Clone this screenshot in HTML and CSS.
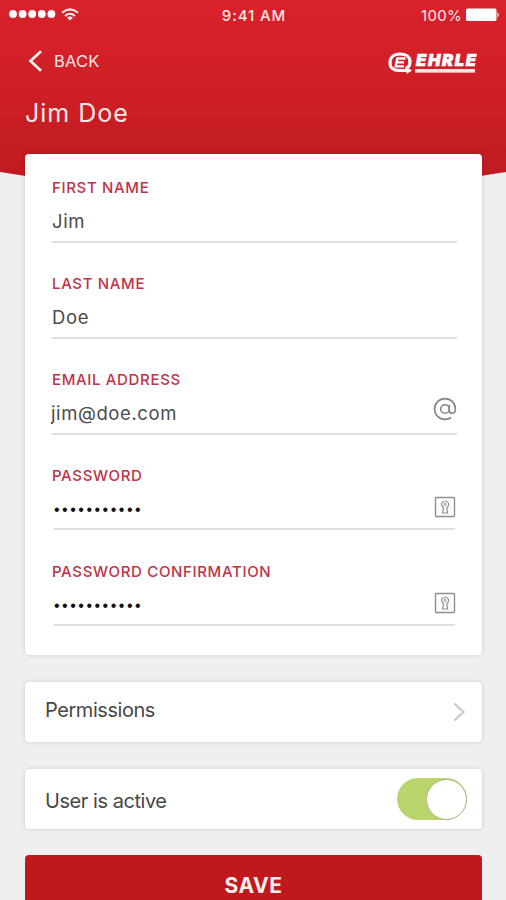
FILE: index.html
```html
<!DOCTYPE html>
<html lang="en">
<head>
<meta charset="utf-8">
<title>Jim Doe</title>
<link rel="stylesheet" href="styles.css">
</head>
<body>
<div class="screen">
  <svg class="backdrop" viewBox="0 0 506 200" aria-hidden="true">
    <defs><linearGradient id="red" x1="0" y1="0" x2="0" y2="1"><stop offset="0" stop-color="#d9212a"/><stop offset=".35" stop-color="#d22028"/><stop offset="1" stop-color="#bd191f"/></linearGradient></defs>
    <path d="M0 0H506V172Q253 214 0 172Z" fill="url(#red)"/>
  </svg>
  <header class="header">
    <div class="status">
      <div class="signal">
        <svg width="47" height="10" viewBox="0 0 47 10" fill="#fff"><circle cx="4" cy="5" r="3.9"/><circle cx="13.6" cy="5" r="3.9"/><circle cx="23.2" cy="5" r="3.9"/><circle cx="32.8" cy="5" r="3.9"/><circle cx="42.4" cy="5" r="3.9"/></svg>
        <svg width="18" height="13" viewBox="0 0 18 13" fill="none" stroke="#ffe9e6" stroke-width="2"><path d="M1 4.8Q9-2 17 4.8M4 8Q9 3.6 14 8"/><path d="M9 12.5L6 9.6Q9 7.4 12 9.6Z" fill="#fff" stroke="none"/></svg>
      </div>
      <span class="time">9:41 AM</span>
      <div class="battery">
        <span class="percent">100%</span>
        <svg width="34" height="14" viewBox="0 0 34 14" fill="#fff"><rect x="0" y="0.5" width="30.5" height="12.5" rx="1.5"/><path d="M31.5 4Q34 6.8 31.5 9.6Z"/></svg>
      </div>
    </div>
    <div class="nav">
      <div class="back">
        <svg width="15" height="22" viewBox="0 0 15 22" fill="none" stroke="#fff3f0" stroke-width="2.7"><path d="M13 1.2L2.5 11L13 20.8"/></svg>
        <span>BACK</span>
      </div>
      <div class="brand">
        <svg width="25" height="23" viewBox="0 0 25 23" fill="none" stroke="#fff"><path d="M19 18.5H11C5.5 18.5 2 15.5 2 11C2 5.5 6 2 12 2C18 2 22 5 22 10C22 13 20.5 15.5 17.5 16.5" stroke-width="3.2"/><path d="M18.5 15L24 18.5L18.5 22Z" fill="#fff" stroke="none"/><path d="M17.5 6.5H9.3L7.7 14.3H16M8.5 10.4H16" stroke-width="2.3"/></svg>
        <div class="wordmark"><span class="brand-name">EHRLE</span><span class="brand-bar"></span></div>
      </div>
    </div>
    <h1 class="title">Jim Doe</h1>
  </header>
  <main class="content">
    <section class="card form">
      <div class="field"><label class="label">FIRST NAME</label><div class="value"><span>Jim</span></div></div>
      <div class="field"><label class="label">LAST NAME</label><div class="value"><span>Doe</span></div></div>
      <div class="field"><label class="label">EMAIL ADDRESS</label><div class="value"><span class="email">jim@doe.com</span>
        <svg class="at" width="24" height="24" viewBox="0 0 24 24" fill="none" stroke="#858585" stroke-width="1.6"><circle cx="12" cy="12" r="4.3"/><path d="M16.3 7.7V13.4Q16.3 16.2 19 16.2Q22.4 16.2 22.4 12A10.4 10.4 0 1 0 12 22.4Q15.5 22.4 18.2 20.5"/></svg></div></div>
      <div class="field secret"><label class="label">PASSWORD</label><div class="value"><span class="dots">•••••••••••</span>
        <svg class="lock" width="22" height="22" viewBox="0 0 22 22" fill="none" stroke="#8f8f8f" stroke-width="1.4"><rect x="1.5" y="1.5" width="19" height="19" rx="1"/><path d="M9.5 11.6A3.5 3.5 0 1 1 12.7 11.6L13.6 17H8.6Z" stroke-width="1.2"/><circle cx="11" cy="8.5" r="1.1" stroke-width="1"/></svg></div></div>
      <div class="field secret"><label class="label">PASSWORD CONFIRMATION</label><div class="value"><span class="dots">•••••••••••</span>
        <svg class="lock" width="22" height="22" viewBox="0 0 22 22" fill="none" stroke="#8f8f8f" stroke-width="1.4"><rect x="1.5" y="1.5" width="19" height="19" rx="1"/><path d="M9.5 11.6A3.5 3.5 0 1 1 12.7 11.6L13.6 17H8.6Z" stroke-width="1.2"/><circle cx="11" cy="8.5" r="1.1" stroke-width="1"/></svg></div></div>
    </section>
    <section class="card row permissions">
      <span>Permissions</span>
      <svg width="13" height="20" viewBox="0 0 13 20" fill="none" stroke="#c9c9c9" stroke-width="2.3"><path d="M1.5 1.5L10.5 10L1.5 18.5"/></svg>
    </section>
    <section class="card row active">
      <span>User is active</span>
      <div class="toggle"><div class="knob"></div></div>
    </section>
    <button class="save">SAVE</button>
  </main>
</div>
</body>
</html>
```
FILE: styles.css
```css
* { box-sizing: border-box; }
body { margin: 0; background: #efefef; font-family: Inter, "Liberation Sans", sans-serif; }
svg { display: block; flex: none; }
.screen { position: relative; width: 506px; height: 900px; overflow: hidden; }
.backdrop { position: absolute; top: 0; left: 0; width: 506px; height: 200px; }
.header { position: relative; height: 154px; color: #ffe9e6; }
.status { display: grid; grid-template-columns: 1fr auto 1fr; align-items: center; height: 30px; padding: 0 6px 0 9px; }
.signal { display: flex; align-items: center; gap: 5px; padding-bottom: 2px; }
.time { font-size: 15px; font-weight: 500; letter-spacing: .9px; padding-top: 1px; margin-left: -1px; }
.battery { display: flex; justify-content: flex-end; align-items: center; gap: 4px; }
.percent { font-size: 15px; letter-spacing: .3px; }
.nav { display: flex; align-items: center; justify-content: space-between; height: 62px; padding: 0 25px 0 28px; }
.back { display: flex; align-items: center; gap: 11px; font-size: 16.5px; letter-spacing: .2px; }
.brand { display: flex; align-items: center; gap: 3px; padding-top: 4px; }
.wordmark { display: flex; flex-direction: column; gap: 2px; width: 65px; }
.brand-name { font: italic 900 16.5px/13px Inter, sans-serif; color: #fff; letter-spacing: 1.7px; -webkit-text-stroke: .7px #fff; }
.brand-bar { height: 4px; width: 60px; margin-left: -1px; background: #ffe3e1; border-bottom: 1px solid #ef9d9e; }
.title { margin: 5px 0 0 25px; font-size: 25px; line-height: 32px; font-weight: 400; letter-spacing: 1px; }
.content { position: relative; display: flex; flex-direction: column; gap: 27px; padding: 0 24px 0 25px; }
.card { background: #fff; border-radius: 4px; box-shadow: 0 0 4px rgba(0, 0, 0, .16); }
.form { height: 501px; padding: 24px 25px 0 27px; display: flex; flex-direction: column; gap: 31px; }
.field { height: 65px; }
.label { display: block; height: 20px; font-size: 15px; line-height: 20px; font-weight: 500; letter-spacing: .65px; color: #bf3347; }
.value { display: flex; justify-content: space-between; align-items: center; height: 45px; padding-top: 3px; border-bottom: 2px solid #dedede; font-size: 18.5px; letter-spacing: .6px; color: #4b4b4b; }
.email { margin-left: -1px; }
.at { margin-bottom: 8px; }
.secret .value { height: 44px; margin: 0 0 0 2px; padding: 0; border: 0; background: linear-gradient(#dedede, #dedede) left bottom / calc(100% - 2px) 2px no-repeat; }
.lock { margin: 0 1px 3px 0; }
.dots { font: 16px/20px "Liberation Sans", sans-serif; letter-spacing: 2.5px; color: #111; padding-top: 3px; }
.row { display: flex; align-items: center; justify-content: space-between; font-size: 20px; letter-spacing: -.45px; color: #474747; }
.permissions { height: 60px; padding: 0 16px 0 20px; }
.permissions span { padding-bottom: 5px; }
.active { height: 60px; padding: 0 15px 0 20px; }
.active span { padding-top: 4px; }
.toggle { width: 70px; height: 42px; border-radius: 21px; background: #bad46c; display: flex; justify-content: flex-end; align-items: center; }
.knob { width: 41px; height: 41px; border-radius: 50%; background: #fff; border: 1.5px solid #a8b883; }
.save { height: 62px; margin-top: -1px; padding: 0; border: 0; border-radius: 4px; background: #c1181d; color: #ffefed; font: 700 21px/24px Inter, sans-serif; letter-spacing: .5px; }
```
